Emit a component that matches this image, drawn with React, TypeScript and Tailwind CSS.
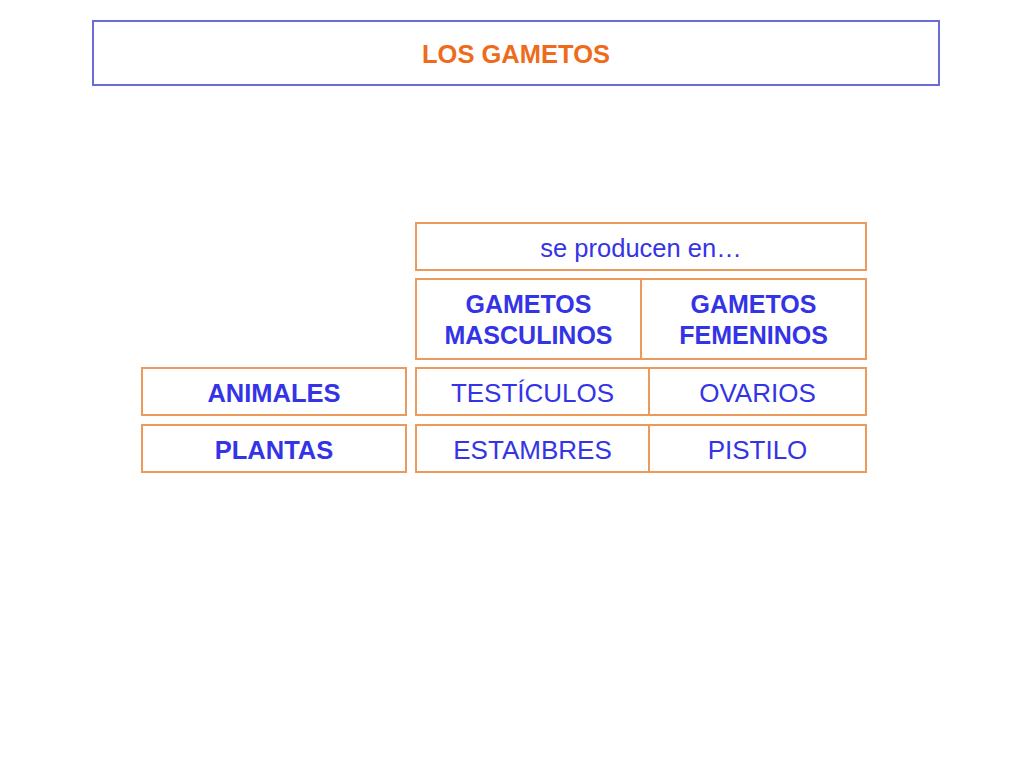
export default function App() {
  const cell = "flex items-center justify-center border-2 border-[#ec9a5c] bg-white pt-[3px] text-[25.5px] leading-[30px] text-[#3434e6]";

  return (
    <div className="min-h-[768px] w-[1024px] bg-white font-['Liberation_Sans',Arial,sans-serif]">
      <div className="pl-[92px] pt-[20px]">
        <div className="flex h-[66px] w-[848px] items-center justify-center border-2 border-[#6b6bd9] pt-[2px]">
          <h1 className="text-[25.5px] font-bold text-[#ef6b1c]">LOS GAMETOS</h1>
        </div>
      </div>

      <div className="mt-[136px] flex flex-col pl-[141px]">
        <div className="flex gap-[8px]">
          <div className="w-[266px]" />
          <div className={`${cell} h-[49px] w-[452px]`}>se producen en…</div>
        </div>

        <div className="mt-[7px] flex gap-[8px]">
          <div className="w-[266px]" />
          <div className="flex h-[82px] w-[452px] border-2 border-[#ec9a5c]">
            <div className="flex w-[225px] items-center justify-center border-r-2 border-[#ec9a5c] pt-[2px] text-center text-[25px] font-bold leading-[31px] text-[#3434e6]">
              GAMETOS<br />MASCULINOS
            </div>
            <div className="flex flex-1 items-center justify-center pt-[2px] text-center text-[25px] font-bold leading-[31px] text-[#3434e6]">
              GAMETOS<br />FEMENINOS
            </div>
          </div>
        </div>

        {[
          ["ANIMALES", "TESTÍCULOS", "OVARIOS", "mt-[7px]"],
          ["PLANTAS", "ESTAMBRES", "PISTILO", "mt-[8px]"],
        ].map(([group, male, female, mt]) => (
          <div key={group} className={`${mt} flex gap-[8px]`}>
            <div className={`${cell} h-[49px] w-[266px] text-[24px] font-bold`}>{group}</div>
            <div className="flex h-[49px] w-[452px] border-2 border-[#ec9a5c] text-[26px] text-[#3434e6]">
              <div className="flex w-[233px] items-center justify-center border-r-2 border-[#ec9a5c] pt-[3px]">{male}</div>
              <div className="flex flex-1 items-center justify-center pt-[3px]">{female}</div>
            </div>
          </div>
        ))}
      </div>
    </div>
  );
}
